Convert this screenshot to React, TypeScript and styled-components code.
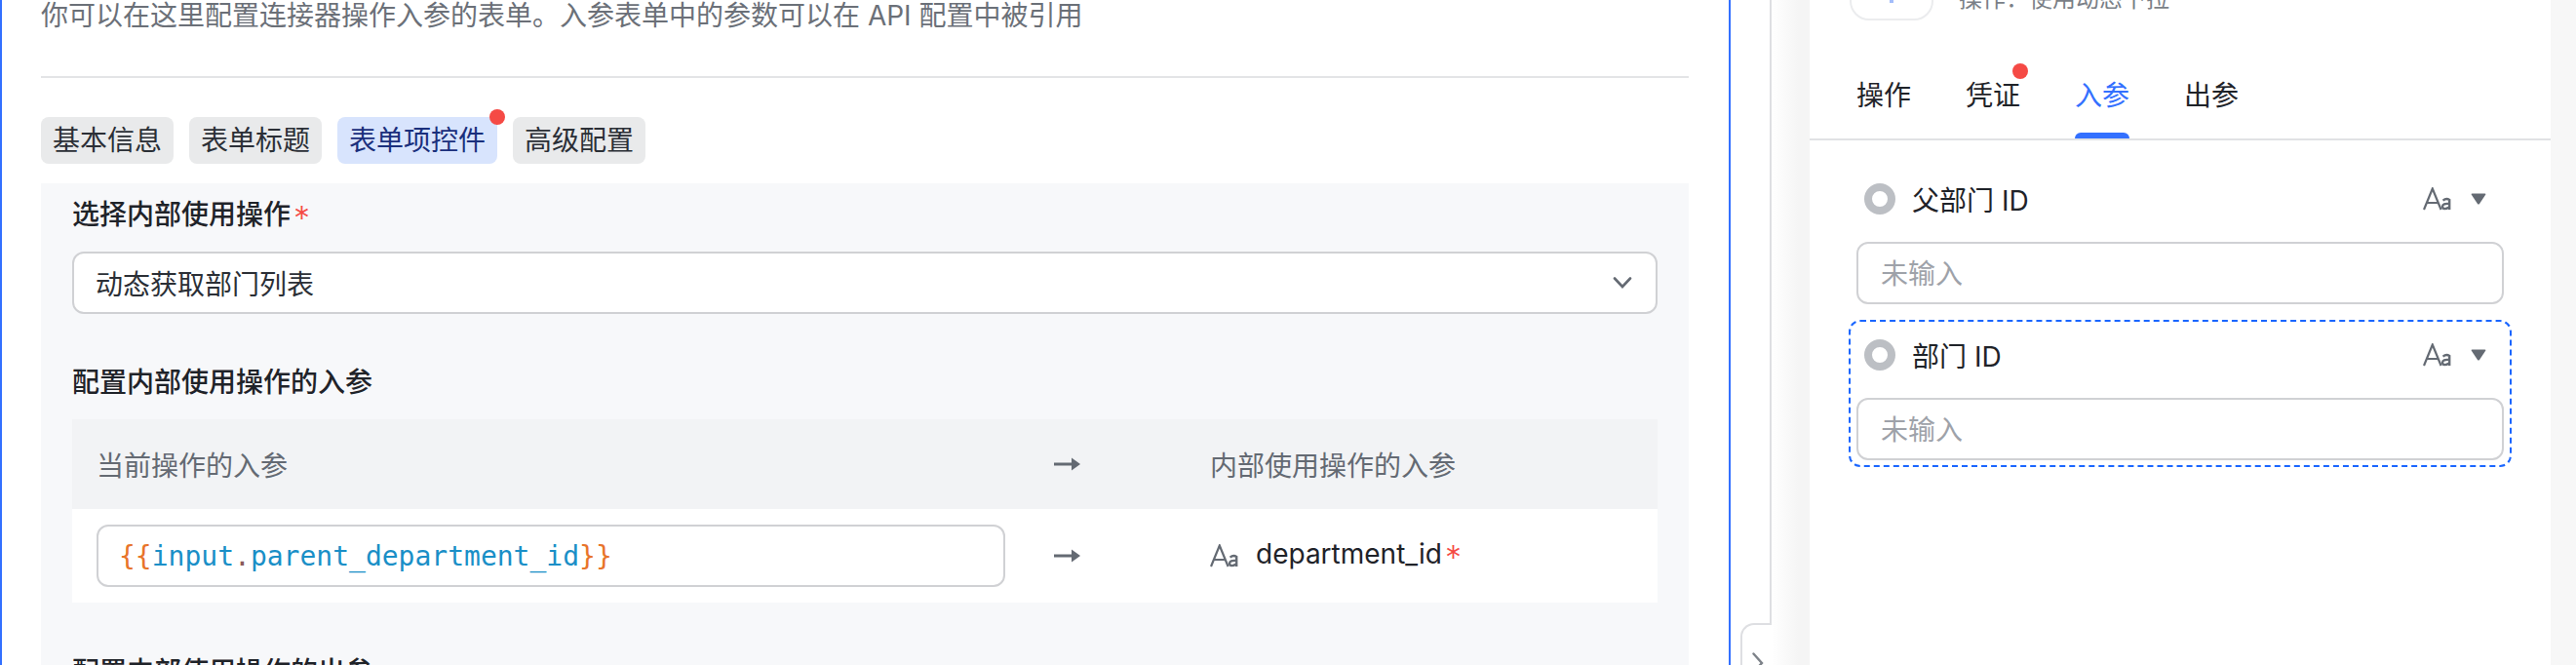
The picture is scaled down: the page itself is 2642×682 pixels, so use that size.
import React from "react";
import styled, { createGlobalStyle } from "styled-components";

const Global = createGlobalStyle`
  html, body { margin: 0; padding: 0; background: #fff; }
  * { box-sizing: border-box; }
`;

const sans = `Inter, "Noto Sans CJK SC", sans-serif`;

const Page = styled.div`
  width: 2642px;
  height: 682px;
  display: flex;
  overflow: hidden;
  font-family: ${sans};
  font-size: 28px;
  color: #1f2329;
  background: #fff;
`;
const EditorPane = styled.section`
  width: 1775px;
  height: 682px;
  flex: none;
  overflow: hidden;
  border-left: 2px solid #3370ff;
  border-right: 2px solid #3370ff;
  padding: 0 41px 0 40px;
`;
const Description = styled.p`
  margin: 0;
  height: 32px;
  line-height: 32px;
  color: #6b7078;
`;
const Divider = styled.hr`
  margin: 46px 0 0;
  border: 0;
  height: 2px;
  background: #e3e4e6;
`;
const TabRow = styled.div`
  display: flex;
  gap: 16px;
  margin-top: 40px;
`;
const ConfigTab = styled.div<{ $active?: boolean }>`
  position: relative;
  height: 48px;
  line-height: 48px;
  padding: 0 12px;
  border-radius: 8px;
  background: ${(p) => (p.$active ? "#d8e4fd" : "#e9eaeb")};
  color: ${(p) => (p.$active ? "#1a2f7c" : "#2b2f36")};
`;
const Dot = styled.span`
  position: absolute;
  width: 16px;
  height: 16px;
  border-radius: 50%;
  background: #f54a45;
`;
const TabDot = styled(Dot)`
  top: -8px;
  right: -8px;
`;
const FormPanel = styled.div`
  margin-top: 20px;
  height: 500px;
  background: #f7f8fa;
  padding: 12px 32px 0 32px;
`;
const FieldLabel = styled.div<{ $gap?: number }>`
  height: 40px;
  line-height: 40px;
  font-weight: 500;
  color: #1f2329;
  margin-top: ${(p) => p.$gap ?? 0}px;
`;
const Star = styled.span`
  color: #f54a45;
  font-size: 34px;
  line-height: 1;
  font-weight: 300;
  margin-left: 3px;
  vertical-align: -6px;
`;
const Select = styled.div`
  margin-top: 18px;
  height: 64px;
  border: 2px solid #d0d1d4;
  border-radius: 12px;
  background: #fff;
  display: flex;
  align-items: center;
  justify-content: space-between;
  padding: 0 24px 0 22px;
  color: #2b2f36;
`;
const Table = styled.div`
  margin-top: 18px;
`;
const TableRow = styled.div<{ $head?: boolean }>`
  display: grid;
  grid-template-columns: 957px 210px 1fr;
  align-items: center;
  height: ${(p) => (p.$head ? 92 : 96)}px;
  background: ${(p) => (p.$head ? "#f2f3f5" : "#fff")};
  color: ${(p) => (p.$head ? "#646a73" : "#1f2329")};
`;
const FirstCell = styled.div`
  padding-left: 25px;
`;
const ArrowCell = styled.div`
  padding-left: 50px;
  display: flex;
  align-items: center;
`;
const NameCell = styled.div`
  display: flex;
  align-items: center;
  gap: 17px;
`;
const CodeInput = styled.div`
  height: 64px;
  border: 2px solid #d0d1d4;
  border-radius: 12px;
  background: #fff;
  display: flex;
  align-items: center;
  padding-left: 21px;
  font-family: "DejaVu Sans Mono", monospace;
  font-size: 28px;
  color: #1a8fc7;
`;
const Brace = styled.span`
  color: #e8742a;
`;
const Period = styled.span`
  color: #8a5a5a;
`;
const Gutter = styled.div`
  position: relative;
  width: 81px;
  height: 682px;
  flex: none;
  display: flex;
`;
const GutterBlank = styled.div`
  width: 40px;
  flex: none;
`;
const GutterShade = styled.div`
  flex: 1;
  border-left: 2px solid #dedfe2;
  background: linear-gradient(90deg, #ffffff 0%, #f5f5f5 70%);
`;
const CollapseHandle = styled.div`
  position: absolute;
  left: 10px;
  top: 639px;
  width: 32px;
  height: 60px;
  background: #fff;
  border: 2px solid #dedfe2;
  border-right: 0;
  border-radius: 14px 0 0 14px;
  display: flex;
  align-items: flex-start;
  padding: 28px 0 0 10px;
`;
const InspectorPane = styled.aside`
  width: 760px;
  height: 682px;
  flex: none;
  background: #fff;
  overflow: hidden;
`;
const Heading = styled.div`
  height: 21px;
  padding-left: 41px;
  display: flex;
  align-items: flex-end;
  gap: 26px;
`;
const IconBox = styled.div`
  width: 86px;
  height: 84px;
  flex: none;
  margin-top: -63px;
  border: 2px solid #ebecee;
  border-radius: 20px;
  display: flex;
  justify-content: center;
  align-items: flex-end;
`;
const IconMark = styled.span`
  width: 4px;
  height: 3px;
  margin-bottom: 16px;
  background: #a3bdfa;
`;
const OperationNote = styled.div`
  font-size: 24px;
  line-height: 34px;
  color: #7a7f87;
  margin-bottom: 5px;
  white-space: nowrap;
`;
const InspectorTabs = styled.div`
  display: flex;
  gap: 56px;
  height: 123px;
  padding: 47px 0 0 48px;
  border-bottom: 2px solid #e1e2e4;
`;
const InspectorTab = styled.div<{ $active?: boolean }>`
  position: relative;
  height: 74px;
  line-height: 60px;
  color: ${(p) => (p.$active ? "#3370ff" : "#1f2329")};
  &::after {
    content: "";
    display: ${(p) => (p.$active ? "block" : "none")};
    position: absolute;
    left: 0;
    right: 0;
    bottom: 0;
    height: 6px;
    background: #3370ff;
    border-radius: 6px 6px 0 0;
  }
`;
const InspectorDot = styled(Dot)`
  top: -3px;
  right: -8px;
`;
const Params = styled.div`
  padding: 24px 40px 0 40px;
`;
const ParamItem = styled.div<{ $selected?: boolean }>`
  height: 151px;
  margin-bottom: 9px;
  padding: 0 6px;
  border: 2px ${(p) => (p.$selected ? "dashed #1a66ff" : "solid transparent")};
  border-radius: 12px;
`;
const ParamHead = styled.div`
  height: 68px;
  display: flex;
  align-items: center;
  padding: 0 18px 0 8px;
`;
const Ring = styled.span`
  width: 32px;
  height: 32px;
  flex: none;
  border: 8px solid #bcbfc4;
  border-radius: 50%;
  margin-right: 17px;
`;
const ParamName = styled.span`
  flex: 1;
`;
const TypePick = styled.span`
  display: flex;
  align-items: center;
  gap: 19px;
`;
const ParamInput = styled.div`
  margin-top: 10px;
  height: 64px;
  border: 2px solid #d0d1d4;
  border-radius: 12px;
  display: flex;
  align-items: center;
  padding: 0 0 2px 23px;
  color: #9ea2a9;
  background: #fff;
`;
const RightEdge = styled.div`
  flex: 1;
  background: #f7f7f7;
`;

const AaIcon = () => (
  <svg width="30" height="24" viewBox="0 0 30 24" fill="none" stroke="#646a73">
    <path d="M1 23 L9.8 1.5 L18.6 23 M4 16 H15.6" strokeWidth="2.2" />
    <path
      d="M20.6 13.6 Q24 10.8 27.2 13 V23 M27.2 17 Q20 16.2 20 20 Q20.6 24 27.2 20.4"
      strokeWidth="2.4"
    />
  </svg>
);

const Caret = () => (
  <svg width="16" height="12" viewBox="0 0 16 12">
    <path d="M1.5 0.5 H14.5 Q16 0.5 15 2 L9 11 Q8 12 7 11 L1 2 Q0 0.5 1.5 0.5 Z" fill="#646a73" />
  </svg>
);

const Arrow = () => (
  <svg width="27" height="14" viewBox="0 0 27 14" fill="none">
    <path d="M0 7 H20" stroke="#646a73" strokeWidth="3" />
    <path d="M18 0.5 L27 7 L18 13.5 Z" fill="#646a73" />
  </svg>
);

const Chevron = () => (
  <svg width="20" height="12" viewBox="0 0 20 12" fill="none">
    <path d="M2 1.5 L10 10 L18 1.5" stroke="#646a73" strokeWidth="2.6" strokeLinecap="round" />
  </svg>
);

const SmallChevron = () => (
  <svg width="12" height="22" viewBox="0 0 12 22" fill="none">
    <path d="M1.5 1.5 L10 11 L1.5 20.5" stroke="#7d8289" strokeWidth="2.4" strokeLinecap="round" />
  </svg>
);

export default function App() {
  return (
    <>
      <Global />
      <Page>
        <EditorPane>
          <Description>你可以在这里配置连接器操作入参的表单。入参表单中的参数可以在 API 配置中被引用</Description>
          <Divider />
          <TabRow>
            <ConfigTab>基本信息</ConfigTab>
            <ConfigTab>表单标题</ConfigTab>
            <ConfigTab $active>
              表单项控件
              <TabDot />
            </ConfigTab>
            <ConfigTab>高级配置</ConfigTab>
          </TabRow>
          <FormPanel>
            <FieldLabel>
              选择内部使用操作<Star>*</Star>
            </FieldLabel>
            <Select>
              动态获取部门列表
              <Chevron />
            </Select>
            <FieldLabel $gap={50}>配置内部使用操作的入参</FieldLabel>
            <Table>
              <TableRow $head>
                <FirstCell>当前操作的入参</FirstCell>
                <ArrowCell>
                  <Arrow />
                </ArrowCell>
                <div>内部使用操作的入参</div>
              </TableRow>
              <TableRow>
                <FirstCell>
                  <CodeInput>
                    <Brace>{"{{"}</Brace>input<Period>.</Period>parent_department_id<Brace>{"}}"}</Brace>
                  </CodeInput>
                </FirstCell>
                <ArrowCell>
                  <Arrow />
                </ArrowCell>
                <NameCell>
                  <AaIcon />
                  <span>
                    department_id<Star>*</Star>
                  </span>
                </NameCell>
              </TableRow>
            </Table>
            <FieldLabel $gap={51}>配置内部使用操作的出参</FieldLabel>
          </FormPanel>
        </EditorPane>
        <Gutter>
          <GutterBlank />
          <GutterShade />
          <CollapseHandle>
            <SmallChevron />
          </CollapseHandle>
        </Gutter>
        <InspectorPane>
          <Heading>
            <IconBox>
              <IconMark />
            </IconBox>
            <OperationNote>操作：使用动态下拉</OperationNote>
          </Heading>
          <InspectorTabs>
            <InspectorTab>操作</InspectorTab>
            <InspectorTab>
              凭证
              <InspectorDot />
            </InspectorTab>
            <InspectorTab $active>入参</InspectorTab>
            <InspectorTab>出参</InspectorTab>
          </InspectorTabs>
          <Params>
            <ParamItem>
              <ParamHead>
                <Ring />
                <ParamName>父部门 ID</ParamName>
                <TypePick>
                  <AaIcon />
                  <Caret />
                </TypePick>
              </ParamHead>
              <ParamInput>未输入</ParamInput>
            </ParamItem>
            <ParamItem $selected>
              <ParamHead>
                <Ring />
                <ParamName>部门 ID</ParamName>
                <TypePick>
                  <AaIcon />
                  <Caret />
                </TypePick>
              </ParamHead>
              <ParamInput>未输入</ParamInput>
            </ParamItem>
          </Params>
        </InspectorPane>
        <RightEdge />
      </Page>
    </>
  );
}
